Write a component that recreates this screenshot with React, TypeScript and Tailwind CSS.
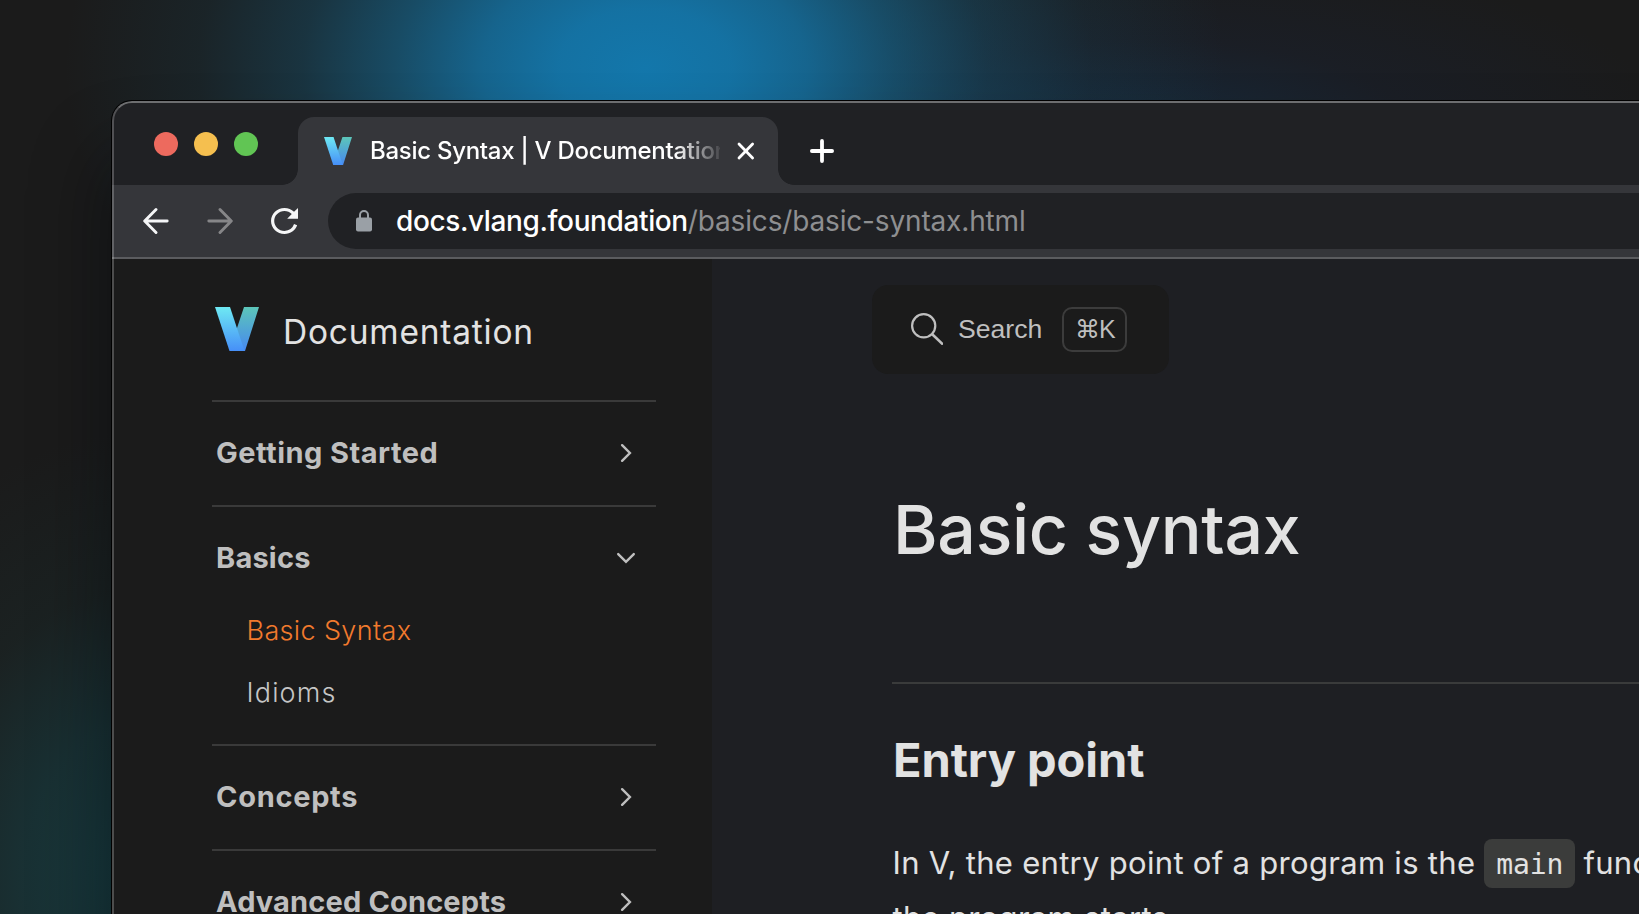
import { useId, type ReactNode } from "react";

function VLogo({ className }: { className: string }) {
  const id = useId();
  return (
    <svg className={className} viewBox="0 0 44 44" aria-hidden="true">
      <defs>
        <linearGradient id={`${id}l`} x1="0" y1="0" x2="0" y2="1">
          <stop offset="0" stopColor="#6ee9f3" />
          <stop offset="1" stopColor="#468ff8" />
        </linearGradient>
        <linearGradient id={`${id}r`} x1="0" y1="0" x2="0" y2="1">
          <stop offset="0" stopColor="#5cc6b9" />
          <stop offset="1" stopColor="#4788f0" />
        </linearGradient>
      </defs>
      <polygon points="29,0 44,0 30,44 26,44 20,24 22,21" fill={`url(#${id}r)`} />
      <polygon points="0,0 15,0 29.5,44 14.5,44" fill={`url(#${id}l)`} />
    </svg>
  );
}

function Arrow({ className }: { className: string }) {
  return (
    <svg className={className} viewBox="0 0 26 26" fill="none" stroke="currentColor" strokeWidth="2.9" strokeLinecap="round" strokeLinejoin="round">
      <path d="M24.2 13H2M13 1.6 1.7 13 13 24.4" />
    </svg>
  );
}

function Chevron({ open }: { open?: boolean }) {
  return (
    <svg
      className={open ? "size-5 rotate-90" : "size-5"}
      viewBox="0 0 20 20"
      fill="none"
      stroke="currentColor"
      strokeWidth="2.4"
      strokeLinecap="round"
      strokeLinejoin="miter"
    >
      <path d="M6.1 2.2 13.9 10l-7.8 7.8" />
    </svg>
  );
}

function TabStrip() {
  return (
    <div className="flex h-[84px] items-end bg-[#202124]">
      <div className="flex h-[84px] w-[170px] gap-4 pt-[31px] pl-[42px]">
        <span className="size-6 rounded-full bg-[#ed6a5e]" />
        <span className="size-6 rounded-full bg-[#f5bf4f]" />
        <span className="size-6 rounded-full bg-[#61c554]" />
      </div>
      <div className="size-4 bg-[radial-gradient(circle_at_0_0,transparent_15.5px,#35363a_16.2px)]" />
      <div className="flex h-[68px] w-[480px] items-center rounded-t-2xl bg-[#35363a] pl-[26px]">
        <VLogo className="size-7" />
        <div className="ml-[18px] w-[350px] overflow-hidden pb-px text-2xl font-medium tracking-[-0.28px] whitespace-nowrap text-white [mask-image:linear-gradient(to_right,black_305px,transparent_355px)]">
          Basic Syntax | V Documentation
        </div>
        <svg className="ml-[17px] size-[18px]" viewBox="0 0 18 18" fill="none" stroke="#fff" strokeWidth="2.8" strokeLinecap="round">
          <path d="M2 2l13.6 14M15.6 2 2 16" />
        </svg>
      </div>
      <div className="size-4 bg-[radial-gradient(circle_at_100%_0,transparent_15.5px,#35363a_16.2px)]" />
      <svg className="mb-[22px] ml-4 size-6" viewBox="0 0 24 24" fill="none" stroke="#fff" strokeWidth="3.8" strokeLinecap="round">
        <path d="M12 1.9v20.2M1.9 12h20.2" />
      </svg>
    </div>
  );
}

function Toolbar() {
  return (
    <div className="flex h-[74px] items-center border-b-2 border-[#5b5c5f] bg-[#35363a] pl-[31px]">
      <Arrow className="-mt-px size-[26px] text-[#f5f6f7]" />
      <Arrow className="-mt-px ml-[38px] size-[26px] rotate-180 text-[#868688]" />
      <svg className="ml-[38px] h-[26px] w-[27px]" viewBox="4 4 16 16" preserveAspectRatio="none" fill="#f5f6f7">
        <path d="M17.65 6.35A7.958 7.958 0 0 0 12 4c-4.42 0-7.99 3.58-7.99 8s3.57 8 7.99 8c3.5 0 6.5-2.3 7.5-5.4l-1.85-.7A6.1 6.1 0 0 1 12 18.1c-3.37 0-6.1-2.73-6.1-6.1s2.73-6.1 6.1-6.1c1.66 0 3.18.75 4.3 1.85L13.6 10.6H20V4l-2.35 2.35z" />
      </svg>
      <div className="ml-[30px] flex h-14 flex-1 items-center rounded-l-full bg-[#202124] pl-7 text-[28px]">
        <svg className="h-[22px] w-4 text-[#9aa0a6]" viewBox="0 0 16 22" fill="none">
          <path d="M4 9V5a4 4 0 0 1 8 0v4" stroke="currentColor" strokeWidth="2" />
          <rect y="7.5" width="16" height="14" rx="2" fill="currentColor" />
        </svg>
        <div className="ml-6 whitespace-nowrap">
          <span className="font-medium tracking-[-0.38px] text-white">docs.vlang.foundation</span>
          <span className="tracking-[-0.16px] text-[#8e8f91]">/basics/basic-syntax.html</span>
        </div>
      </div>
    </div>
  );
}

function Section({ title, tracking, open, children }: { title: string; tracking: string; open?: boolean; children?: ReactNode }) {
  return (
    <section className="border-t-2 border-[#3a3a3a]">
      <div className="flex h-[103px] items-center justify-between pr-5 pb-0.5 pl-1 text-[#bfbfbf]">
        <span className={`text-[29px] font-bold ${tracking}`}>{title}</span>
        <Chevron open={open} />
      </div>
      {children}
    </section>
  );
}

function Sidebar() {
  return (
    <aside className="w-[600px] shrink-0 bg-[#1b1b1b] pl-[100px]">
      <div className="w-[444px]">
        <div className="flex h-[141px] items-start pl-[3px]">
          <VLogo className="mt-12 size-11" />
          <span className="mt-[53px] ml-6 text-[33.5px] leading-10 tracking-[0.78px] text-[#e2e2e2]">Documentation</span>
        </div>
        <Section title="Getting Started" tracking="tracking-[0.47px]" />
        <Section title="Basics" tracking="tracking-[0.2px]" open>
          <ul className="-mt-[10px] pb-5 pl-[34.5px] text-[27px] font-light">
            <li className="flex h-[62px] items-center tracking-[0.35px] text-[#f27a2d]">Basic Syntax</li>
            <li className="flex h-[62px] items-center tracking-[1.15px] text-[#c6c6c6]">Idioms</li>
          </ul>
        </Section>
        <Section title="Concepts" tracking="tracking-[0.7px]" />
        <Section title="Advanced Concepts" tracking="tracking-[0.15px]" />
      </div>
    </aside>
  );
}

function Article() {
  return (
    <main className="flex-1 overflow-hidden bg-[#1e1f23] text-[#e2e2e2]">
      <div className="mt-[26px] ml-40 flex h-[89px] w-[297px] items-center rounded-2xl bg-[#1b1b1b] pl-[39px] font-['Liberation_Sans',Arial,sans-serif] text-[#bfbfbf]">
        <svg className="-mt-0.5 size-8" viewBox="0 0 32 32" fill="none" stroke="currentColor" strokeWidth="2.2">
          <circle cx="12.7" cy="12.8" r="11.6" />
          <path d="M21 21l11 10.5" strokeWidth="2.6" />
        </svg>
        <span className="-mt-0.5 ml-[15px] text-[26.6px] leading-8">Search</span>
        <kbd className="ml-5 flex h-[45px] w-[65px] items-center justify-center rounded-[10px] border-2 border-[#3c3c3c] font-['Liberation_Sans',Arial,sans-serif] text-[25px] tracking-[-1px]">
          ⌘K
        </kbd>
      </div>
      <div className="pl-[180px]">
        <h1 className="mt-[115px] pl-px text-[68px] leading-[80px] font-medium tracking-[-0.3px]">Basic syntax</h1>
        <hr className="mt-[113px] border-t-2 border-[#3a3b3b]" />
        <h2 className="mt-[46px] pl-px text-[47px] leading-[60px] font-bold tracking-[-0.05px]">Entry point</h2>
        <p className="mt-[45px] pl-[0.5px] text-[31px] leading-[55px] tracking-[0.3px] whitespace-nowrap">
          In V, the entry point of a program is the{" "}
          <code className="rounded-lg bg-[#3b3c3b] px-3 pt-[9px] pb-[7px] font-['DejaVu_Sans_Mono',monospace] text-[28px] leading-none tracking-[-0.1px]">main</code>
          <span className="-ml-px"> function</span>
          <br />
          the program starts.
        </p>
      </div>
    </main>
  );
}

export default function App() {
  return (
    <div className="h-screen w-full overflow-hidden bg-[#1b1b1b] bg-[radial-gradient(580px_400px_at_645px_68px,#1377ab_0%,rgba(20,117,168,0.96)_15%,rgba(21,113,161,0.85)_28%,rgba(22,108,150,0.6)_43%,rgba(22,100,136,0.34)_59%,rgba(22,90,118,0.14)_77%,transparent_100%),radial-gradient(360px_450px_at_150px_880px,#173b40_0%,rgba(24,56,60,0.75)_35%,rgba(26,48,48,0.3)_65%,transparent_100%),radial-gradient(520px_180px_at_1150px_130px,#17293a_0%,rgba(26,32,44,0.6)_50%,transparent_100%)] pt-[101px] pl-28 font-['Inter',sans-serif]">
      <div className="relative flex h-[900px] w-[1600px] flex-col overflow-hidden rounded-tl-[20px] shadow-[0_0_0_1px_#000,0_60px_70px_10px_rgba(0,8,12,0.4)]">
        <TabStrip />
        <Toolbar />
        <div className="flex flex-1">
          <Sidebar />
          <Article />
        </div>
        <div className="pointer-events-none absolute inset-0 rounded-tl-[20px] border-t-2 border-l-2 border-t-white/35 border-l-white/22" />
      </div>
    </div>
  );
}
